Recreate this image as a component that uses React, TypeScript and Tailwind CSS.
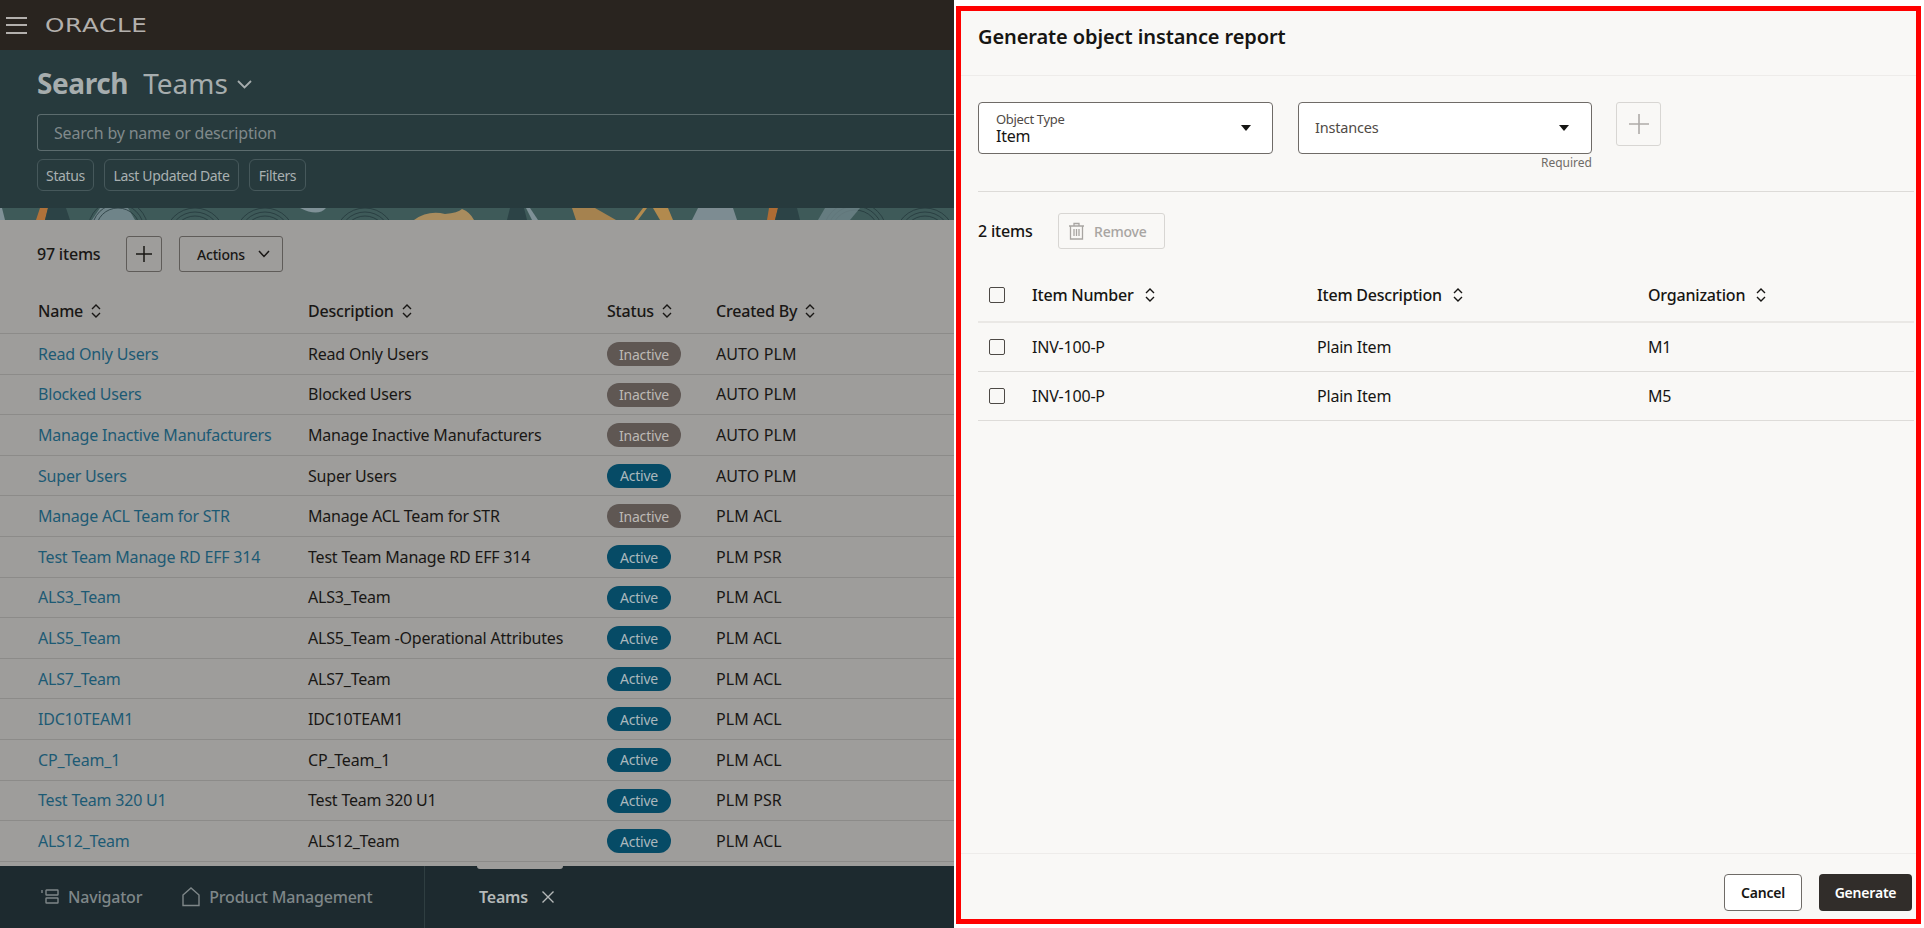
import React from "react";

const rows: [string, string, boolean, string][] = [
  ["Read Only Users", "Read Only Users", false, "AUTO PLM"],
  ["Blocked Users", "Blocked Users", false, "AUTO PLM"],
  ["Manage Inactive Manufacturers", "Manage Inactive Manufacturers", false, "AUTO PLM"],
  ["Super Users", "Super Users", true, "AUTO PLM"],
  ["Manage ACL Team for STR", "Manage ACL Team for STR", false, "PLM ACL"],
  ["Test Team Manage RD EFF 314", "Test Team Manage RD EFF 314", true, "PLM PSR"],
  ["ALS3_Team", "ALS3_Team", true, "PLM ACL"],
  ["ALS5_Team", "ALS5_Team -Operational Attributes", true, "PLM ACL"],
  ["ALS7_Team", "ALS7_Team", true, "PLM ACL"],
  ["IDC10TEAM1", "IDC10TEAM1", true, "PLM ACL"],
  ["CP_Team_1", "CP_Team_1", true, "PLM ACL"],
  ["Test Team 320 U1", "Test Team 320 U1", true, "PLM PSR"],
  ["ALS12_Team", "ALS12_Team", true, "PLM ACL"],
];

function Sort({ className = "" }: { className?: string }) {
  return (
    <svg width="10" height="14" viewBox="0 0 10 14" fill="none" stroke="currentColor" strokeWidth="1.4" className={className}>
      <path d="M1 5 L5 1 L9 5" />
      <path d="M1 9 L5 13 L9 9" />
    </svg>
  );
}

function Caret() {
  return (
    <svg width="10" height="6" viewBox="0 0 10 6" className="text-[#161513]" fill="currentColor">
      <path d="M0 0 H10 L5 6 Z" />
    </svg>
  );
}

function Check() {
  return <span className="block w-[16px] h-[16px] rounded-[2px] border-[1.5px] border-[#4d4945] bg-transparent" />;
}

function Banner() {
  return (
    <svg width="954" height="12" viewBox="0 0 954 12" className="block">
      <rect width="954" height="12" fill="#3e5a59" />
      <polygon points="0,0 2,0 5,12 0,12" fill="#7f9197" />
      <polygon points="40,0 48,0 45,12 36,12" fill="#b0723a" />
      <polygon points="48,0 66,0 70,12 45,12" fill="#2c4346" />
      <polygon points="100,0 128,0 135,12 92,12" fill="#6f8489" />
      <g fill="none" stroke="#24393c" strokeWidth="0.8">
        <circle cx="118" cy="22" r="22" /><circle cx="118" cy="22" r="26" /><circle cx="118" cy="22" r="30" />
        <circle cx="195" cy="30" r="22" /><circle cx="195" cy="30" r="26" /><circle cx="195" cy="30" r="30" />
        <circle cx="265" cy="30" r="22" /><circle cx="265" cy="30" r="26" /><circle cx="265" cy="30" r="30" />
        <circle cx="365" cy="30" r="22" /><circle cx="365" cy="30" r="26" /><circle cx="365" cy="30" r="30" />
        <circle cx="855" cy="26" r="24" /><circle cx="855" cy="26" r="28" /><circle cx="855" cy="26" r="32" />
        <circle cx="925" cy="30" r="22" /><circle cx="925" cy="30" r="26" /><circle cx="925" cy="30" r="30" />
      </g>
      <path d="M300 0 Q318 9 326 0 Z" fill="#7f9197" />
      <path d="M414 12 Q428 2 445 6 Q458 5 462 1 Q470 4 474 12 Z" fill="#a98c5e" />
      <polygon points="510,0 524,0 527,12 507,12" fill="#2c4346" />
      <polygon points="526,0 530,0 538,12 532,12" fill="#7f9197" />
      <polygon points="572,0 595,0 616,12 576,12" fill="#a5824f" />
      <polygon points="643,0 647,0 638,12 634,12" fill="#b28a4e" />
      <polygon points="653,0 668,0 673,12 660,12" fill="#b28a4e" />
      <polygon points="698,0 733,0 737,12 692,12" fill="#7d8c92" />
      <polygon points="769,0 778,0 775,12 767,12" fill="#ae6c34" />
      <polygon points="778,0 797,0 800,12 775,12" fill="#2c4346" />
      <polygon points="825,0 860,0 850,12 818,12" fill="#6f8489" opacity="0.8" />
    </svg>
  );
}

export default function App() {
  return (
    <div className="w-[1924px] h-[928px] flex overflow-hidden bg-white font-['Noto_Sans',sans-serif] tracking-[-0.2px]">
      {/* page behind the drawer */}
      <div className="w-[954px] h-full flex flex-col bg-[#9e9d9b] shrink-0">
        <header className="h-[50px] bg-[#29241f] flex items-center pl-[6px]">
          <div className="w-[21px] flex flex-col gap-[5.5px]">
            <span className="block h-[2px] bg-[#b3b0ad]" />
            <span className="block h-[2px] bg-[#b3b0ad]" />
            <span className="block h-[2px] bg-[#b3b0ad]" />
          </div>
          <span className="ml-[18px] w-[101px] text-[19px] leading-none text-[#b3b0ad] font-['DejaVu_Sans',sans-serif] font-normal scale-x-[1.3] origin-left tracking-[0.5px]">
            ORACLE
          </span>
        </header>

        <section className="h-[158px] bg-[#273a3d] pl-[37px] pt-[13px]">
          <div className="flex items-center h-[40px] text-[#a6adae]">
            <span className="text-[28px] font-bold leading-none tracking-[-0.4px]">Search</span>
            <span className="ml-[15px] text-[28px] leading-none tracking-normal">Teams</span>
            <svg width="15" height="9" viewBox="0 0 15 9" fill="none" stroke="currentColor" strokeWidth="1.8" className="ml-[9px] mt-[2px]">
              <path d="M1 1 L7.5 7.5 L14 1" />
            </svg>
          </div>
          <div className="mt-[11px] h-[37px] border border-r-0 border-[#5c6c6e] rounded-l-[4px] flex items-center pl-[16px] text-[16px] text-[#80898b]">
            Search by name or description
          </div>
          <div className="mt-[8px] flex gap-[10px] text-[14px] text-[#a9b0b1] tracking-[-0.35px]">
            <span className="h-[32px] w-[57px] flex items-center justify-center border border-[#46585b] rounded-[6px]">Status</span>
            <span className="h-[32px] w-[135px] flex items-center justify-center border border-[#46585b] rounded-[6px]">Last Updated Date</span>
            <span className="h-[32px] w-[57px] flex items-center justify-center border border-[#46585b] rounded-[6px]">Filters</span>
          </div>
        </section>

        <Banner />

        <div className="flex-1 flex flex-col min-h-0">
          <div className="flex items-center pl-[37px] pt-[16px] h-[52px] text-[#191715]">
            <span className="w-[89px] text-[16px] font-medium">97 items</span>
            <span className="w-[36px] h-[36px] border border-[#5f5c59] rounded-[3px] flex items-center justify-center">
              <svg width="18" height="18" viewBox="0 0 18 18" stroke="currentColor" strokeWidth="1.5">
                <path d="M9 1 V17 M1 9 H17" />
              </svg>
            </span>
            <span className="ml-[17px] w-[104px] h-[36px] border border-[#5f5c59] rounded-[3px] flex items-center pl-[17px] gap-[13px] text-[14px] font-medium">
              Actions
              <svg width="12" height="8" viewBox="0 0 12 8" fill="none" stroke="currentColor" strokeWidth="1.5">
                <path d="M1 1 L6 6.5 L11 1" />
              </svg>
            </span>
          </div>

          <div className="h-[62px] pl-[38px] grid grid-cols-[270px_299px_109px_1fr] items-center border-b border-[#8c8b89] text-[16px] font-medium text-[#191715] pt-[16px]">
            <span className="flex items-center gap-[8px]">Name <Sort /></span>
            <span className="flex items-center gap-[8px]">Description <Sort /></span>
            <span className="flex items-center gap-[8px]">Status <Sort /></span>
            <span className="flex items-center gap-[8px]">Created By <Sort /></span>
          </div>

          {rows.map((r, i) => (
            <div key={i} className="h-[40.6px] pl-[38px] grid grid-cols-[270px_299px_109px_1fr] items-center border-b border-[#8c8b89] text-[16px] text-[#191715] shrink-0">
              <span className="text-[#1d5a74] whitespace-nowrap">{r[0]}</span>
              <span className="whitespace-nowrap">{r[1]}</span>
              <span>
                {r[2] ? (
                  <span className="inline-flex items-center justify-center h-[24px] w-[64px] rounded-full bg-[#064b66] text-[14px] text-[#aab8bd]">Active</span>
                ) : (
                  <span className="inline-flex items-center justify-center h-[24px] w-[74px] rounded-full bg-[#5f5753] text-[14px] text-[#bdb9b5]">Inactive</span>
                )}
              </span>
              <span className="tracking-[0.1px]">{r[3]}</span>
            </div>
          ))}
        </div>

        <footer className="relative h-[62px] bg-[#1d2a2f] flex items-center shrink-0">
          <span className="absolute left-[477px] top-0 w-[86px] h-[3px] bg-[#9e9d9b] rounded-b-[3px]" />
          <div className="w-[425px] h-full flex items-center border-r border-[#2f3e41] text-[16px] text-[#7f8789] font-medium">
            <svg width="18" height="16" viewBox="0 0 18 16" fill="none" stroke="currentColor" strokeWidth="1.4" className="ml-[41px]">
              <path d="M1 1 V4" />
              <rect x="5" y="1" width="12" height="5" rx="0.5" />
              <rect x="5" y="9" width="12" height="5" rx="0.5" />
            </svg>
            <span className="ml-[9px]">Navigator</span>
            <svg width="18" height="20" viewBox="0 0 18 20" fill="none" stroke="currentColor" strokeWidth="1.4" className="ml-[40px]">
              <path d="M1 8 L9 1 L17 8 V18.5 H1 Z" />
            </svg>
            <span className="ml-[9px]">Product Management</span>
          </div>
          <span className="ml-[54px] text-[16px] font-semibold text-[#b5b9b9]">Teams</span>
          <svg width="12" height="12" viewBox="0 0 12 12" stroke="#b5b9b9" strokeWidth="1.4" className="ml-[14px]">
            <path d="M0.5 0.5 L11.5 11.5 M11.5 0.5 L0.5 11.5" />
          </svg>
        </footer>
      </div>

      {/* drawer */}
      <div className="flex-1 pl-[2px] pt-[6px] pr-[3px] pb-[4px] min-w-0">
        <div className="h-full border-[5px] border-[#ff0000] bg-[#f9f8f6] flex flex-col text-[#161513]">
          <div className="h-[65px] shrink-0 border-b border-[#eeecea] pl-[17px] pt-[10px] text-[20px] font-semibold leading-[32px] tracking-[-0.1px]">
            Generate object instance report
          </div>

          <div className="h-[116px] shrink-0 ml-[17px] mr-[2px] border-b border-[#dddbd8] pt-[26px] flex items-start">
            <div className="w-[295px] h-[52px] bg-white border border-[#6f6b67] rounded-[4px] flex items-center justify-between pl-[17px] pr-[21px]">
              <div className="flex flex-col">
                <span className="text-[13px] leading-[15px] text-[#4f4a46] tracking-[-0.33px]">Object Type</span>
                <span className="text-[16px] leading-[18px]">Item</span>
              </div>
              <Caret />
            </div>
            <div className="ml-[25px] w-[294px]">
              <div className="h-[52px] bg-white border border-[#6f6b67] rounded-[4px] flex items-center justify-between pl-[16px] pr-[22px]">
                <span className="text-[14.5px] text-[#4f4a46]">Instances</span>
                <Caret />
              </div>
              <div className="text-right text-[12px] leading-[16px] mt-[1px] text-[#6f6b67] tracking-normal">Required</div>
            </div>
            <div className="ml-[24px] w-[45px] h-[44px] border border-[#d8d6d3] rounded-[3px] flex items-center justify-center text-[#aeaba8]">
              <svg width="22" height="22" viewBox="0 0 22 22" stroke="currentColor" strokeWidth="1.6">
                <path d="M11 1 V21 M1 11 H21" />
              </svg>
            </div>
          </div>

          <div className="shrink-0 flex items-center pl-[17px] pt-[21px] h-[57px]">
            <span className="w-[80px] text-[16px] font-medium">2 items</span>
            <span className="w-[107px] h-[36px] border border-[#d8d6d3] rounded-[3px] flex items-center pl-[9px] gap-[9px] text-[14px] font-medium text-[#a8a5a2]">
              <svg width="17" height="18" viewBox="0 0 17 18" fill="none" stroke="currentColor" strokeWidth="1.3">
                <path d="M1 4 H16 M6 4 V1.5 H11 V4 M2.5 4 V17 H14.5 V4 M6 7 V14 M8.5 7 V14 M11 7 V14" />
              </svg>
              Remove
            </span>
          </div>

          <div className="shrink-0 ml-[17px] mr-[2px] text-[16px]">
            <div className="h-[74px] grid grid-cols-[54px_285px_331px_1fr] items-center border-b-2 border-[#eae8e5] pt-[20px]">
              <span className="pl-[11px]"><Check /></span>
              <span className="flex items-center gap-[11px] font-medium">Item Number <Sort /></span>
              <span className="flex items-center gap-[11px] font-medium">Item Description <Sort /></span>
              <span className="flex items-center gap-[11px] font-medium">Organization <Sort /></span>
            </div>
            {["M1", "M5"].map((m) => (
              <div key={m} className="h-[49px] grid grid-cols-[54px_285px_331px_1fr] items-center border-b border-[#dedcd9]">
                <span className="pl-[11px]"><Check /></span>
                <span>INV-100-P</span>
                <span>Plain Item</span>
                <span>{m}</span>
              </div>
            ))}
          </div>

          <div className="flex-1" />

          <div className="h-[66px] shrink-0 border-t border-[#eeecea] flex justify-end gap-[17px] pt-[20px] pr-[4px] text-[14px] font-semibold">
            <span className="w-[78px] h-[37px] bg-white border border-[#6f6b67] rounded-[4px] flex items-center justify-center">Cancel</span>
            <span className="w-[93px] h-[37px] bg-[#312d2a] text-white rounded-[4px] flex items-center justify-center">Generate</span>
          </div>
        </div>
      </div>
    </div>
  );
}
